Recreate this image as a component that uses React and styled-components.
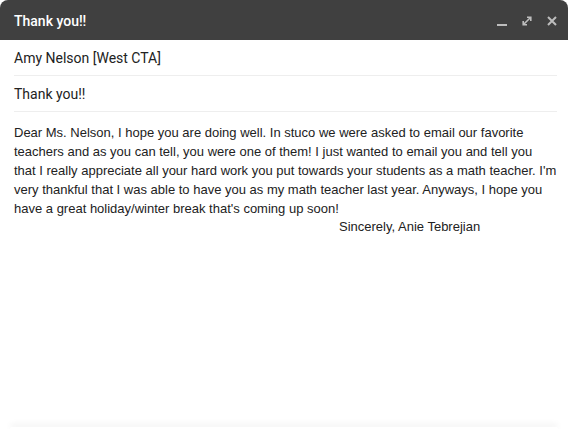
import React from "react"
import styled, { createGlobalStyle } from "styled-components"

const Global = createGlobalStyle`
  html, body {
    margin: 0;
    padding: 0;
    background: #ffffff;
  }
  body {
    font-family: Roboto, "Liberation Sans", Arial, sans-serif;
  }
`

const Window = styled.div`
  width: 568px;
  height: 429px;
  display: flex;
  flex-direction: column;
  background: #ffffff;
  overflow: hidden;
`

const TitleBar = styled.div`
  height: 40px;
  flex-shrink: 0;
  display: flex;
  align-items: center;
  justify-content: space-between;
  padding: 0 8px 0 14px;
  background: #404040;
  border-radius: 8px 8px 0 0;
`

const Title = styled.span`
  color: #ffffff;
  font-size: 14px;
  font-weight: 500;
  padding-top: 1px;
`

const Controls = styled.div`
  display: flex;
  align-items: center;
  gap: 8px;
  padding-top: 2px;
`

const IconButton = styled.button`
  width: 17px;
  height: 17px;
  padding: 0;
  border: 0;
  background: none;
  display: flex;
  align-items: center;
  justify-content: center;
  cursor: pointer;
  svg {
    display: block;
  }
`

const Field = styled.div`
  margin: 0 11px 0 14px;
  height: 35px;
  display: flex;
  align-items: center;
  border-bottom: 1px solid #eeeeee;
  color: #222222;
  font-size: 14px;
`

const Body = styled.div`
  flex: 1;
  padding: 11px 11px 0 14px;
  font-family: "Liberation Sans", Arial, sans-serif;
  font-size: 13px;
  line-height: 19px;
  color: #222222;
`

const Signature = styled.div`
  padding-left: 325px;
  margin-top: -1px;
`

const Footer = styled.div`
  height: 2px;
  margin: 0 10px;
  border-radius: 6px 6px 0 0;
  background: #ffffff;
  box-shadow: 0 -2px 6px rgba(0, 0, 0, 0.12);
`

const MinimizeIcon = () => (
  <svg width="12" height="12" viewBox="0 0 12 12">
    <rect x="1" y="9" width="10" height="2" fill="#bdbdbd" />
  </svg>
)

const ExpandIcon = () => (
  <svg width="12" height="12" viewBox="0 0 12 12" fill="none" stroke="#bdbdbd" strokeWidth="1.6">
    <path d="M3 9 L9 3" />
    <path d="M6 2.2 H9.8 V6" />
    <path d="M2.2 6 V9.8 H6" />
  </svg>
)

const CloseIcon = () => (
  <svg width="12" height="12" viewBox="0 0 12 12" stroke="#bdbdbd" strokeWidth="2">
    <path d="M2 2 L10 10 M10 2 L2 10" />
  </svg>
)

export default function App() {
  return (
    <>
      <Global />
      <Window>
        <TitleBar>
          <Title>Thank you!!</Title>
          <Controls>
            <IconButton aria-label="Minimize"><MinimizeIcon /></IconButton>
            <IconButton aria-label="Full screen"><ExpandIcon /></IconButton>
            <IconButton aria-label="Close"><CloseIcon /></IconButton>
          </Controls>
        </TitleBar>
        <Field>Amy Nelson [West CTA]</Field>
        <Field>Thank you!!</Field>
        <Body>
          Dear Ms. Nelson, I hope you are doing well. In stuco we were asked to email our favorite
          teachers and as you can tell, you were one of them! I just wanted to email you and tell you
          that I really appreciate all your hard work you put towards your students as a math teacher. I'm
          very thankful that I was able to have you as my math teacher last year. Anyways, I hope you
          have a great holiday/winter break that's coming up soon!
          <Signature>Sincerely, Anie Tebrejian</Signature>
        </Body>
        <Footer />
      </Window>
    </>
  )
}
